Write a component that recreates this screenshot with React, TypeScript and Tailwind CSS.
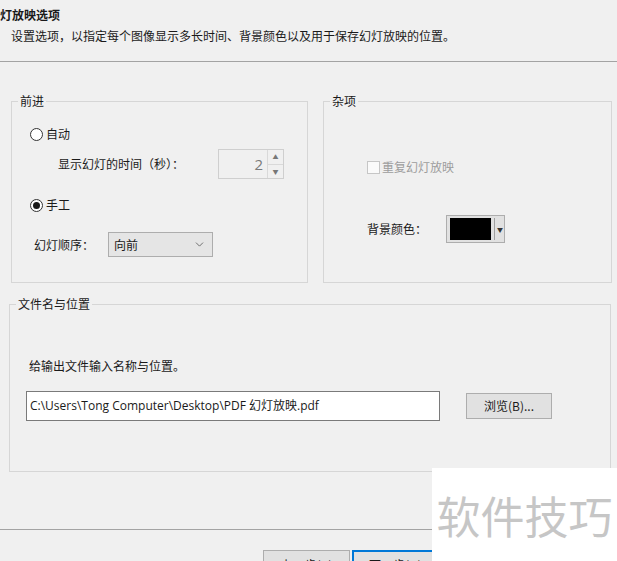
import { ChevronDown } from "lucide-react";

const cjk = { fontFamily: '"Noto Sans CJK SC", "Noto Sans", sans-serif' };
const latin = { fontFamily: '"Open Sans", "Noto Sans CJK SC", sans-serif' };

function Radio({ checked }: { checked?: boolean }) {
  return (
    <span className="flex size-[13px] shrink-0 items-center justify-center rounded-full border border-[#333] bg-white">
      {checked && <span className="size-[7px] rounded-full bg-[#1a1a1a]" />}
    </span>
  );
}

function Spinner() {
  return (
    <div className="flex h-[30px] w-[66px] border border-[#cfcfcf] bg-[#f0f0f0]">
      <div className="flex flex-1 items-center justify-end pr-[4px] text-[15px] text-[#7a7a7a]" style={latin}>
        2
      </div>
      <div className="flex w-[16px] flex-col border-l border-[#d9d9d9]">
        <div className="flex flex-1 items-center justify-center border-b border-[#d9d9d9] text-[6px] text-[#777]">▲</div>
        <div className="flex flex-1 items-center justify-center text-[6px] text-[#777]">▼</div>
      </div>
    </div>
  );
}

function Group({
  label,
  className,
  children,
}: {
  label: string;
  className: string;
  children: React.ReactNode;
}) {
  return (
    <fieldset className={`box-border border border-[#d6d6d6] ${className}`}>
      <legend className="ml-[6px] px-[2px] text-[12px] leading-[16px] text-[#1a1a1a]">{label}</legend>
      {children}
    </fieldset>
  );
}

export default function App() {
  return (
    <div className="relative h-[561px] w-[617px] overflow-hidden bg-[#f0f0f0] text-[12px] text-[#1a1a1a]" style={cjk}>
      <div className="h-[62px] border-b border-[#a3a3a3] pt-[7px]">
        <div className="text-[12px] font-bold leading-[16px]">灯放映选项</div>
        <div className="mt-[5px] pl-[11px] leading-[16px]">
          设置选项，以指定每个图像显示多长时间、背景颜色以及用于保存幻灯放映的位置。
        </div>
      </div>

      <div className="mt-[31px] flex gap-[15px] pl-[11px]">
        <Group label="前进" className="h-[190px] w-[297px]">
          <div className="flex flex-col">
            <div className="mt-[17px] flex h-[16px] items-center gap-[3px] pl-[18px] leading-[16px]">
              <Radio />
              <span>自动</span>
            </div>
            <div className="mt-[7px] flex items-center pl-[46px]">
              <span className="w-[160px] leading-[16px]">显示幻灯的时间（秒）：</span>
              <Spinner />
            </div>
            <div className="mt-[18px] flex h-[16px] items-center gap-[3px] pl-[18px] leading-[16px]">
              <Radio checked />
              <span>手工</span>
            </div>
            <div className="mt-[19px] flex items-center pl-[22px]">
              <span className="w-[74px] leading-[16px]">幻灯顺序：</span>
              <div className="flex h-[25px] w-[105px] items-center justify-between border border-[#adadad] bg-[#e5e5e5] pl-[5px] pr-[6px]">
                <span className="leading-[16px]">向前</span>
                <ChevronDown className="size-[13px] text-[#555]" strokeWidth={1.5} />
              </div>
            </div>
          </div>
        </Group>

        <Group label="杂项" className="h-[190px] w-[289px]">
          <div className="flex flex-col">
            <div className="mt-[50px] flex h-[16px] items-center gap-[2px] pl-[43px]">
              <span className="size-[13px] border border-[#c6c6c6] bg-[#fafafa]" />
              <span className="leading-[16px] text-[#9d9d9d]">重复幻灯放映</span>
            </div>
            <div className="mt-[40px] flex items-center pl-[43px]">
              <span className="w-[79px] leading-[16px]">背景颜色：</span>
              <div className="flex h-[28px] w-[59px] items-center border border-[#adadad] bg-[#e1e1e1] pl-[3px]">
                <div className="h-[22px] w-[41px] bg-black" />
                <div className="ml-[3px] h-[22px] w-px bg-[#a0a0a0]" />
                <span className="ml-[2px] text-[6px] text-[#333]">▼</span>
              </div>
            </div>
          </div>
        </Group>
      </div>

      <Group label="文件名与位置" className="ml-[9px] mt-[13px] h-[176px] w-[602px]">
        <div className="flex flex-col pl-[16px]">
          <div className="ml-[3px] mt-[46px] leading-[16px]">给输出文件输入名称与位置。</div>
          <div className="mt-[17px] flex items-center gap-[26px]">
            <div
              className="flex h-[30px] w-[414px] items-center border border-[#7a7a7a] bg-white pl-[3px] text-[12px] text-[#1a1a1a]"
              style={latin}
            >
              C:\Users\Tong Computer\Desktop\PDF 幻灯放映.pdf
            </div>
            <div className="flex h-[26px] w-[86px] items-center justify-center border border-[#adadad] bg-[#e1e1e1] leading-[16px]">
              浏览(B)...
            </div>
          </div>
        </div>
      </Group>

      <div className="mt-[57px] h-px bg-[#a3a3a3]" />

      <div className="mt-[20px] flex gap-[2px] pl-[263px]">
        <div className="flex h-[26px] w-[87px] items-center justify-center border border-[#adadad] bg-[#e1e1e1] pt-[3px]">
          上一步(B)
        </div>
        <div className="flex h-[26px] w-[87px] items-center justify-center border-2 border-[#0078d7] bg-[#e1e1e1] pt-[3px]">
          下一步(N)
        </div>
      </div>

      <div className="absolute left-[432px] top-[468px] flex h-[93px] w-[185px] items-center justify-center bg-white">
        <span className="text-[44px] leading-none text-[#c6c6c6]" style={cjk}>
          软件技巧
        </span>
      </div>
    </div>
  );
}
